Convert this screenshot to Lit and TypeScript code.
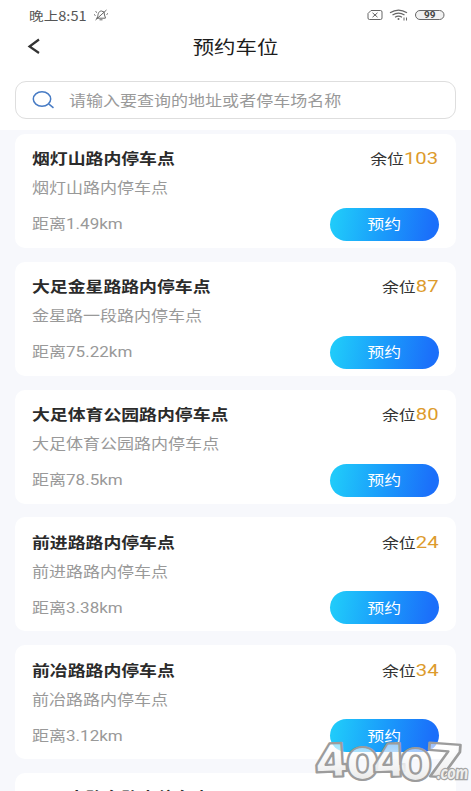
import { LitElement, html, css, svg, nothing } from "lit";
import { customElement, property } from "lit/decorators.js";

interface Lot { name: string; address?: string; distance?: string; free?: string; }

const LOTS: Lot[] = [
  { name: "烟灯山路内停车点", address: "烟灯山路内停车点", distance: "1.49", free: "103" },
  { name: "大足金星路路内停车点", address: "金星路一段路内停车点", distance: "75.22", free: "87" },
  { name: "大足体育公园路内停车点", address: "大足体育公园路内停车点", distance: "78.5", free: "80" },
  { name: "前进路路内停车点", address: "前进路路内停车点", distance: "3.38", free: "24" },
  { name: "前冶路路内停车点", address: "前冶路路内停车点", distance: "3.12", free: "34" },
  { name: "二环南路东路内停车点" },
];

@customElement("parking-card")
class ParkingCard extends LitElement {
  @property({ attribute: false }) lot!: Lot;

  static styles = css`
    :host {
      display: flex; flex-direction: column; box-sizing: border-box;
      height: 114px; flex: none; padding: 12.4px 17.5px 0 17px;
      background: #fff; border-radius: 10px; white-space: nowrap;
    }
    .row { display: flex; justify-content: space-between; align-items: center; height: 24px; }
    .foot { height: 33px; margin-top: 8.6px; }
    .address { height: 24px; margin-top: 5px; }
    .wide { display: block; transform: scaleX(1.19); transform-origin: left center; line-height: 24px; }
    .right { transform-origin: right center; }
    .name { font-size: 15px; font-weight: 700; color: #2b2b2b; }
    .muted { font-size: 14.3px; color: #999; }
    .distance { font-family: Roboto, "Noto Sans CJK SC", sans-serif; }
    .free { font-size: 14.2px; color: #333; display: flex; align-items: baseline; }
    .count { color: #dd9b2c; font-size: 17px; font-family: Roboto, sans-serif; }
    .book {
      border: 0; padding: 0; width: 108.5px; height: 33px; border-radius: 17px; color: #fff;
      font: 14.2px "Noto Sans CJK SC", sans-serif;
      background: linear-gradient(100deg, #20cafa 5%, #1a9bfb 50%, #1b6ffa 92%);
    }
    .book .wide { transform-origin: center; margin-top: -2px; }
  `;

  render() {
    const { name, address, distance, free } = this.lot;
    return html`
      <div class="row">
        <span class="wide name">${name}</span>
        ${free ? html`<span class="wide right free">余位<span class="count">${free}</span></span>` : nothing}
      </div>
      ${address ? html`<div class="address"><span class="wide muted">${address}</span></div>` : nothing}
      ${distance ? html`
        <div class="row foot">
          <span class="wide muted distance">距离${distance}km</span>
          <button class="book"><span class="wide">预约</span></button>
        </div>` : nothing}`;
  }
}

const MARK = [
  { t: "4", x: 314, y: 777, w: 34, r: -3 },
  { t: "0", x: 346, y: 780, w: 33, r: 0 },
  { t: "4", x: 372, y: 777, w: 34, r: -2 },
  { t: "0", x: 399, y: 781, w: 33, r: 0 },
  { t: "7", x: 427, y: 777, w: 34, r: 4 },
];

@customElement("app-root")
class AppRoot extends LitElement {
  static styles = css`
    :host {
      display: flex; flex-direction: column; position: relative; height: 791px; overflow: hidden;
      background: #f7f8fc; font-family: "Noto Sans CJK SC", sans-serif;
    }
    .top { height: 130px; flex: none; background: #fff; box-sizing: border-box; }
    .status { display: flex; align-items: center; height: 30px; padding: 0 26px 0 29px; }
    .clock { font-size: 12.5px; width: 64px; color: #555; }
    .clock span { display: inline-block; transform: scaleX(1.17); transform-origin: left; white-space: nowrap; }
    .spacer { flex: 1; }
    svg { display: block; flex: none; }
    .nav { display: grid; grid-template-columns: 60px 1fr 60px; align-items: center; height: 32px; }
    .back { margin-left: 26px; }
    .title { text-align: center; font-size: 18px; font-weight: 400; color: #1c1c1c; margin-top: -1px; transform: scaleX(1.19); }
    .search {
      display: flex; align-items: center; gap: 12.5px; box-sizing: border-box; height: 38px;
      margin: 19px 15px 0; padding-left: 16px; border: 1px solid #dedede; border-radius: 11px;
    }
    .hint { font-size: 14.3px; color: #999; margin-top: -2px; transform: scaleX(1.19); transform-origin: left; white-space: nowrap; }
    .list { display: flex; flex-direction: column; gap: 13.8px; padding: 4px 15px 0; }
    .mark { position: absolute; left: 0; top: 0; pointer-events: none; }
    .digit { font: 900 46px Inter, sans-serif; }
    .com { font: italic 900 18px Lato, sans-serif; }
  `;

  render() {
    return html`
      <div class="top">
        <div class="status">
          <div class="clock"><span>晚上8:51</span></div>
          <svg width="16" height="12" viewBox="0 0 16 12" fill="none" stroke="#666" stroke-width="1">
            <path d="M3 9.200h9.500M4.500 9C5 6 5 2 8.500 2q3.500 0 3 4l1 3M6.500 10.800h3M13.500 1L2.500 11M1 5.500l1.500 1M15 4.500l-1.500 1M2.500 2.500l1.500 1" />
          </svg>
          <div class="spacer"></div>
          <svg width="78" height="14" viewBox="0 0 78 14" fill="none" stroke="#666">
            <path d="M4 2.500h9.500q1.500 0 1.500 1.500v6q0 1.500-1.500 1.500h-11Q1 11.500 1 10V5.500z" />
            <path d="M5.500 4.800l5 4.400M10.500 4.800l-5 4.400" />
            <path d="M23 4.800q8.500-5.400 17 0M25.500 7q6-3.700 12 0M28 9.200q3.500-2 7 0" stroke-width="1.300" />
            <circle cx="31.500" cy="11" r="1" fill="#666" stroke="none" />
            <path d="M37 9.500v3M39.500 9.500v3" />
            <rect x="48.500" y="2.500" width="28.500" height="9" rx="4.500" fill="#f1f1f1" />
            <text x="57" y="10" font-family="Roboto" font-size="8.500" font-weight="700" fill="#444" stroke="none" textLength="11.500" lengthAdjust="spacingAndGlyphs">99</text>
          </svg>
        </div>
        <div class="nav">
          <svg class="back" width="16" height="18" viewBox="0 0 16 18" fill="none" stroke="#333" stroke-width="2.200"><path d="M13 2.500L3.500 9.500l9.500 6.500" /></svg>
          <div class="title">预约车位</div>
        </div>
        <div class="search">
          <svg width="24" height="20" viewBox="0 0 24 20" fill="none" stroke="#477bc4" stroke-width="1.500">
            <ellipse cx="10" cy="9" rx="8.700" ry="7.300" /><path d="M17 14.200l4.500 3.600" />
          </svg>
          <span class="hint">请输入要查询的地址或者停车场名称</span>
        </div>
      </div>
      <div class="list">${LOTS.map((lot) => html`<parking-card .lot=${lot}></parking-card>`)}</div>
      <svg class="mark" width="471" height="791" viewBox="0 0 471 791">
        <defs>
          <linearGradient id="silver" x1="0" y1="0" x2="0" y2="1">
            <stop offset="0.200" stop-color="#fff" stop-opacity=".55" /><stop offset=".6" stop-color="#f4f4f4" stop-opacity=".9" /><stop offset="1" stop-color="#dcdcdc" />
          </linearGradient>
        </defs>
        ${MARK.map((m) => svg`<text class="digit" x=${m.x} y=${m.y} textLength=${m.w} lengthAdjust="spacingAndGlyphs"
          transform="rotate(${m.r} ${m.x + 15} 760)" fill="url(#silver)" stroke="#9c9c9c" stroke-width="2.200" stroke-linejoin="round">${m.t}</text>`)}
        <text class="com" x="437" y="779" textLength="31" lengthAdjust="spacingAndGlyphs" fill="#eee" stroke="#a5a5a5" stroke-width="2.500" paint-order="stroke">.com</text>
      </svg>`;
  }
}
